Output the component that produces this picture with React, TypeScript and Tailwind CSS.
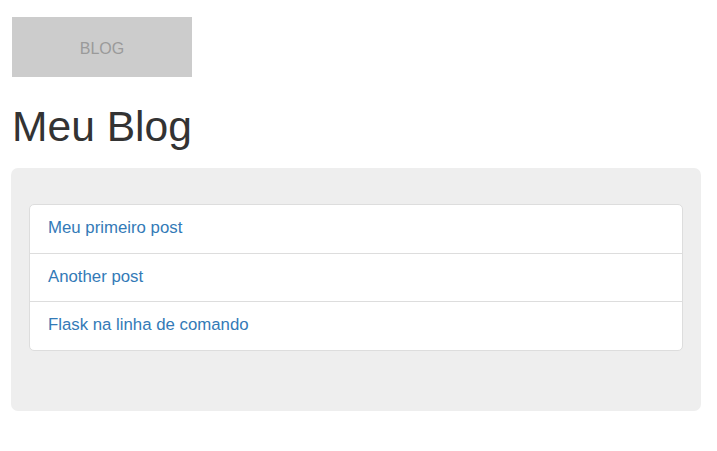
const posts = ['Meu primeiro post', 'Another post', 'Flask na linha de comando'];

export default function App() {
  return (
    <div className="min-h-screen bg-white pl-[11px] pr-[16px] pt-[17px] font-['Liberation_Sans',Arial,sans-serif] text-[#333]">
      <div className="ml-px flex h-[60px] w-[180px] items-center justify-center bg-[#ccc] pt-[3px] text-[16px] text-[#9a9a9a]">
        BLOG
      </div>

      <h1 className="mt-[26px] mb-[18px] ml-px text-[42.6px] leading-[47px] font-normal">Meu Blog</h1>

      <div className="rounded-[7px] bg-[#eee] px-[18px] pt-[36px] pb-[60px]">
        <div className="flex flex-col divide-y divide-[#ddd] rounded-[5px] border border-[#ddd] bg-white">
          {posts.map(p => (
            <a key={p} href="#" className="block px-[18px] pt-[11px] pb-[13px] text-[16.8px] leading-[23.7px] text-[#337ab7]">
              {p}
            </a>
          ))}
        </div>
      </div>
    </div>
  );
}
